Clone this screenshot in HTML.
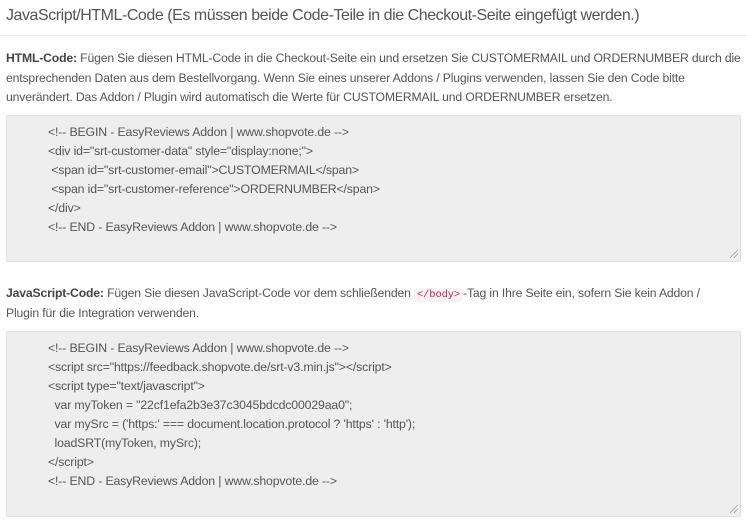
<!DOCTYPE html>
<html><head><meta charset="utf-8"><style>
body{margin:0;background:#fff;font-family:"Liberation Sans",sans-serif;color:#555;width:747px;height:520px;overflow:hidden;position:relative}
.t{position:absolute;left:6px;top:7px;font-size:16px;color:#555;letter-spacing:-0.45px;white-space:nowrap}
.hr{position:absolute;left:0;top:35px;width:747px;height:1px;background:#eee}
.p{position:absolute;left:6px;font-size:12.2px;line-height:19.5px;color:#555;letter-spacing:-0.15px}
.p b{color:#444}
.box{position:absolute;left:6px;width:733px;background:#eee;border:1px solid #e0e0e0;border-radius:2px}
.code{position:absolute;left:48px;font-size:12.3px;line-height:19px;color:#555;white-space:pre;letter-spacing:-0.15px}
code{font-family:"Liberation Mono",monospace;font-size:10.5px;line-height:1;color:#c7254e;background:#f9f2f4;padding:1px 3px;border-radius:3px}
.g{position:absolute;width:8px;height:8px;background:linear-gradient(135deg,transparent 45%,#999 45%,#999 52%,transparent 52%,transparent 70%,#999 70%,#999 77%,transparent 77%)}
</style></head><body>
<div class="t">JavaScript/HTML-Code (Es müssen beide Code-Teile in die Checkout-Seite eingefügt werden.)</div>
<div class="hr"></div>
<div class="p" style="top:49px;width:740px"><b>HTML-Code:</b> Fügen Sie diesen HTML-Code in die Checkout-Seite ein und ersetzen Sie CUSTOMERMAIL und ORDERNUMBER durch die entsprechenden Daten aus dem Bestellvorgang. Wenn Sie eines unserer Addons / Plugins verwenden, lassen Sie den Code bitte unverändert. Das Addon / Plugin wird automatisch die Werte für CUSTOMERMAIL und ORDERNUMBER ersetzen.</div>
<div class="box" style="top:115px;height:145px"></div>
<div class="code" style="top:123px">&lt;!-- BEGIN - EasyReviews Addon | www.shopvote.de --&gt;
&lt;div id="srt-customer-data" style="display:none;"&gt;
 &lt;span id="srt-customer-email"&gt;CUSTOMERMAIL&lt;/span&gt;
 &lt;span id="srt-customer-reference"&gt;ORDERNUMBER&lt;/span&gt;
&lt;/div&gt;
&lt;!-- END - EasyReviews Addon | www.shopvote.de --&gt;</div>
<div class="g" style="left:730px;top:250px"></div>
<div class="p" style="top:284px;width:712px"><b>JavaScript-Code:</b> Fügen Sie diesen JavaScript-Code vor dem schließenden <code>&lt;/body&gt;</code>-Tag in Ihre Seite ein, sofern Sie kein Addon / Plugin für die Integration verwenden.</div>
<div class="box" style="top:331px;height:184px"></div>
<div class="code" style="top:339px">&lt;!-- BEGIN - EasyReviews Addon | www.shopvote.de --&gt;
&lt;script src="https://feedback.shopvote.de/srt-v3.min.js"&gt;&lt;/script&gt;
&lt;script type="text/javascript"&gt;
  var myToken = "22cf1efa2b3e37c3045bdcdc00029aa0";
  var mySrc = ('https:' === document.location.protocol ? 'https' : 'http');
  loadSRT(myToken, mySrc);
&lt;/script&gt;
&lt;!-- END - EasyReviews Addon | www.shopvote.de --&gt;</div>
<div class="g" style="left:730px;top:505px"></div>
</body></html>
